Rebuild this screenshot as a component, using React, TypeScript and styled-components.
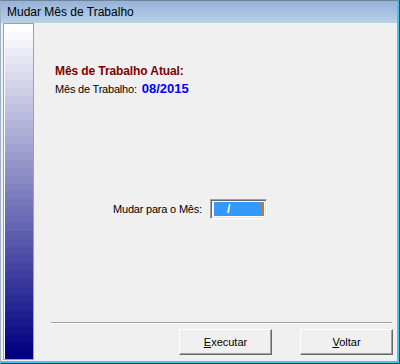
import React from "react";
import styled, { createGlobalStyle } from "styled-components";

const GlobalStyle = createGlobalStyle`
  html, body {
    margin: 0;
    padding: 0;
    background: #f0f0f0;
  }
  body {
    font-family: "Liberation Sans", Arial, sans-serif;
  }
`;

// stepped white -> navy bands like the old VB side banner
const bands = 42;
const stepStops = Array.from({ length: bands }, (_, i) => {
  const t = i / (bands - 1);
  const rg = Math.round(255 * (1 - t));
  const b = Math.round(255 - 127 * t);
  const c = `rgb(${rg},${rg},${b})`;
  const from = ((i / bands) * 100).toFixed(2);
  const to = (((i + 1) / bands) * 100).toFixed(2);
  return `${c} ${from}%, ${c} ${to}%`;
}).join(", ");

const Window = styled.div`
  width: 400px;
  height: 364px;
  box-sizing: border-box;
  border-top: 1px solid #6f8399;
  border-left: 1px solid #9fb2c8;
  border-right: 1px solid #2b3b4c;
  border-bottom: 1px solid #2b3b4c;
  overflow: hidden;
`;

const Frame = styled.div`
  height: 100%;
  box-sizing: border-box;
  border-right: 2px solid #3fc7e8;
  border-bottom: 2px solid #3fc7e8;
  display: flex;
  flex-direction: column;
`;

const TitleBar = styled.div`
  height: 22px;
  flex-shrink: 0;
  background: linear-gradient(#96b2d7, #b8d0ea);
  display: flex;
  align-items: center;
  padding-left: 6px;
  font-size: 12px;
  color: #000;
`;

const Client = styled.div`
  flex: 1;
  display: flex;
  background: #f0f0f0;
  padding: 0 0 1px 2px;
`;

const Banner = styled.div`
  width: 29px;
  border: 1px solid #a0a0a0;
  background: linear-gradient(${stepStops});
  box-shadow: inset 1px 0 #ffffff;
`;

const Content = styled.div`
  flex: 1;
  display: flex;
  flex-direction: column;
`;

const Info = styled.div`
  padding: 40px 0 0 21px;
`;

const Heading = styled.div`
  font-size: 12px;
  line-height: 17px;
  font-weight: bold;
  letter-spacing: -0.1px;
  color: #800000;
`;

const InfoLine = styled.div`
  font-size: 11px;
  line-height: 17px;
  letter-spacing: -0.2px;
  color: #000;
`;

const Period = styled.span`
  font-size: 13px;
  font-weight: bold;
  letter-spacing: 0;
  color: #0000ff;
  margin-left: 5px;
`;

const ChangeRow = styled.div`
  display: flex;
  align-items: center;
  gap: 8px;
  margin-top: 101px;
  padding-left: 79px;
`;

const Label = styled.span`
  font-size: 11px;
  letter-spacing: -0.2px;
  color: #000;
`;

const Field = styled.div`
  width: 57px;
  height: 20px;
  box-sizing: border-box;
  border-top: 1px solid #a0a0a0;
  border-left: 1px solid #a0a0a0;
  border-right: 1px solid #ffffff;
  border-bottom: 1px solid #ffffff;
  box-shadow: inset 1px 1px #696969, inset -1px -1px #e3e3e3;
  background: #fff;
  padding: 2px 2px 2px 3px;
  display: flex;
`;

const Selection = styled.div`
  flex: 1;
  background: #3399ff;
  color: #fff;
  font-size: 12px;
  font-weight: bold;
  line-height: 14px;
  padding-left: 13px;
  border-right: 2px solid #e07020;
`;

const Footer = styled.div`
  margin-top: auto;
  padding-bottom: 5px;
`;

const Separator = styled.div`
  margin: 0 5px 0 17px;
  border-top: 1px solid #a0a0a0;
  border-bottom: 1px solid #ffffff;
`;

const Buttons = styled.div`
  display: flex;
  justify-content: flex-end;
  gap: 28px;
  margin-top: 5px;
  padding-right: 4px;
`;

const Button = styled.button`
  width: 93px;
  height: 26px;
  box-sizing: border-box;
  background: #f0f0f0;
  border-top: 1px solid #ffffff;
  border-left: 1px solid #ffffff;
  border-right: 1px solid #696969;
  border-bottom: 1px solid #696969;
  box-shadow: inset -1px -1px #a0a0a0;
  font-family: "Liberation Sans", Arial, sans-serif;
  font-size: 11px;
  color: #000;
  padding: 0;
`;

export default function App() {
  return (
    <>
      <GlobalStyle />
      <Window>
        <Frame>
          <TitleBar>Mudar Mês de Trabalho</TitleBar>
          <Client>
            <Banner />
            <Content>
              <Info>
                <Heading>Mês de Trabalho Atual:</Heading>
                <InfoLine>
                  Mês de Trabalho:<Period>08/2015</Period>
                </InfoLine>
              </Info>
              <ChangeRow>
                <Label>Mudar para o Mês:</Label>
                <Field>
                  <Selection>/</Selection>
                </Field>
              </ChangeRow>
              <Footer>
                <Separator />
                <Buttons>
                  <Button>
                    <u>E</u>xecutar
                  </Button>
                  <Button>
                    <u>V</u>oltar
                  </Button>
                </Buttons>
              </Footer>
            </Content>
          </Client>
        </Frame>
      </Window>
    </>
  );
}
